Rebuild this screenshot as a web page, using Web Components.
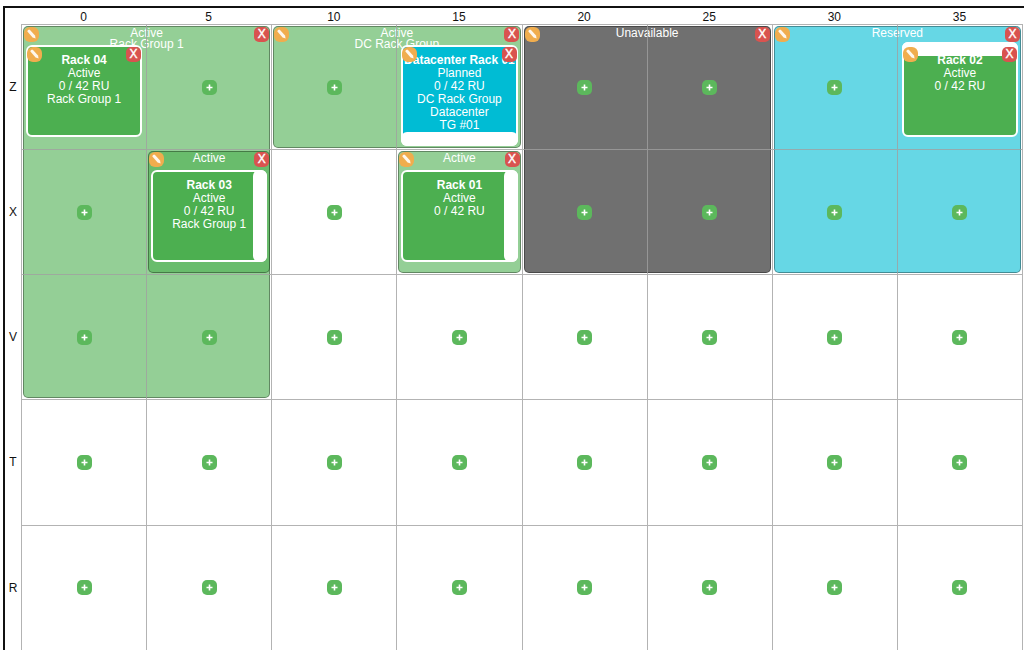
<!DOCTYPE html>
<html lang="en">
<head>
<meta charset="utf-8">
<title>Floor plan</title>
<style>
    body {
        margin: 6px 0 0 3px;
        background: #fff;
        font-family: "Liberation Sans", Arial, sans-serif;
        font-size: 12px;
        overflow: hidden;
    }
</style>
</head>
<body>

<floor-plan columns="0,5,10,15,20,25,30,35" rows="Z,X,V,T,R">
    <floor-tile col="1" row="1" width="2" depth="3" status="Active" group="Rack Group 1"></floor-tile>
    <floor-tile col="3" row="1" width="2" depth="1" status="Active" group="DC Rack Group"></floor-tile>
    <floor-tile col="5" row="1" width="2" depth="2" status="Unavailable"></floor-tile>
    <floor-tile col="7" row="1" width="2" depth="2" status="Reserved"></floor-tile>
    <floor-tile col="2" row="2" width="1" depth="1" status="Active"></floor-tile>
    <floor-tile col="4" row="2" width="1" depth="1" status="Active"></floor-tile>

    <rack-tile col="1" row="1" name="Rack 04" status="Active" lines="0 / 42 RU|Rack Group 1" editable></rack-tile>
    <rack-tile col="4" row="1" name="Datacenter Rack 01" status="Planned" lines="0 / 42 RU|DC Rack Group|Datacenter|TG #01" facing="down" editable></rack-tile>
    <rack-tile col="8" row="1" name="Rack 02" status="Active" lines="0 / 42 RU" facing="up" editable></rack-tile>
    <rack-tile col="2" row="2" name="Rack 03" status="Active" lines="0 / 42 RU|Rack Group 1" facing="right"></rack-tile>
    <rack-tile col="4" row="2" name="Rack 01" status="Active" lines="0 / 42 RU" facing="right"></rack-tile>
</floor-plan>

<script>
class TileButton extends HTMLElement {

    constructor() {
        super();
        this.shadow = this.attachShadow({mode: 'open'});
    }

    connectedCallback() {
        this.render();
    }

    icon(kind) {
        if (kind === 'edit') {
            return `<svg viewBox="0 0 15 15" aria-hidden="true">
                <path fill="#fff" opacity=".9" d="M3.4 4.6Q3.2 3.6 4.2 2.9 5.2 2.3 6 3L11 8.4 11.6 11.4 8.6 10.6Z"/>
            </svg>`;
        }
        if (kind === 'add') {
            return `<svg viewBox="0 0 15 15" aria-hidden="true">
                <path stroke="#fff" stroke-width="1.6" d="M7.5 4.5v6M4.5 7.5h6"/>
            </svg>`;
        }
        return 'X';
    }

    render() {
        let kind = this.getAttribute('kind');
        let labels = {edit: 'Edit', add: 'Add', remove: 'Remove'};
        this.shadow.innerHTML =
        `
        <style>
            :host {
                display: block;
                width: 15px;
                height: 15px;
            }

            button {
                display: flex;
                align-items: center;
                justify-content: center;
                width: 100%;
                height: 100%;
                padding: 0;
                border: 0;
                border-radius: 5px;
                color: #fff;
                font: 12px/15px "Liberation Sans", Arial, sans-serif;
                cursor: pointer;
            }

            svg {
                display: block;
                width: 15px;
                height: 15px;
            }

            .edit { background: #f0ad4e; border-radius: 6px; }
            .add { background: #5cb85c; }
            .remove { background: #d9534f; -webkit-text-stroke: 0.4px #fff; }
        </style>

        <button type="button" class="${kind}" aria-label="${labels[kind]}">${this.icon(kind)}</button>
        `;
    }
}

class FloorTile extends HTMLElement {

    constructor() {
        super();
        this.shadow = this.attachShadow({mode: 'open'});
    }

    connectedCallback() {
        this.style.gridColumn = `${Number(this.getAttribute('col')) + 1} / span ${this.getAttribute('width')}`;
        this.style.gridRow = `${Number(this.getAttribute('row')) + 1} / span ${this.getAttribute('depth')}`;
        this.render();
    }

    render() {
        let group = this.getAttribute('group');
        this.shadow.innerHTML =
        `
        <style>
            :host {
                --status: 76, 175, 80;
                display: block;
                box-sizing: border-box;
                margin: 2px 1px 1px 2px;
                border: 1px solid rgba(0, 0, 0, .35);
                border-radius: 5px;
                background: rgba(var(--status), .6);
                color: #fff;
            }

            :host([status="Unavailable"]) { --status: 17, 17, 17; }
            :host([status="Reserved"]) { --status: 0, 188, 212; }

            header {
                display: flex;
                justify-content: space-between;
                align-items: flex-start;
            }

            p {
                margin: 1px 0 0;
                line-height: 11px;
                text-align: center;
            }
        </style>

        <header>
            <tile-button kind="edit"></tile-button>
            <p>${this.getAttribute('status')}${group ? '<br>' + group : ''}</p>
            <tile-button kind="remove"></tile-button>
        </header>
        `;
    }
}

class RackTile extends HTMLElement {

    constructor() {
        super();
        this.shadow = this.attachShadow({mode: 'open'});
    }

    connectedCallback() {
        this.style.gridColumn = Number(this.getAttribute('col')) + 1;
        this.style.gridRow = Number(this.getAttribute('row')) + 1;
        this.render();
    }

    render() {
        let lines = [this.getAttribute('status')].concat(this.getAttribute('lines').split('|'));
        this.shadow.innerHTML =
        `
        <style>
            :host {
                display: block;
                box-sizing: border-box;
                position: relative;
                z-index: 2;
                margin: 21px 4px 12px 5px;
                padding-top: 7px;
                border: 2px solid #fff;
                border-radius: 6px;
                background: #4caf50;
                color: #fff;
                line-height: 13px;
                text-align: center;
                white-space: nowrap;
            }

            :host([status="Planned"]) { background: #00bcd4; }

            /* the door side runs past the edge of the rack */
            :host([facing="down"]) { margin-bottom: 3px; }
            :host([facing="up"]) { margin-top: 18px; padding-top: 10px; }

            .name {
                display: flex;
                justify-content: center;
                font-weight: bold;
            }

            .door {
                position: absolute;
                border-radius: 6px;
                background: #fff;
            }

            .up { inset: -2px -2px auto; height: 14px; }
            .down { inset: auto -2px -2px; height: 14px; }
            .right { inset: -2px -2px -2px auto; width: 14px; }

            .edit, .remove {
                position: absolute;
                top: 0;
            }

            .edit { left: -1px; }
            .remove { right: -1px; }

            :host([facing="up"]) .edit, :host([facing="up"]) .remove { top: 3px; }
        </style>

        <div class="name">${this.getAttribute('name')}</div>
        ${lines.map(line => `<div>${line}</div>`).join('')}
        ${this.hasAttribute('facing') ? `<div class="door ${this.getAttribute('facing')}"></div>` : ''}
        ${this.hasAttribute('editable') ? `
            <tile-button class="edit" kind="edit"></tile-button>
            <tile-button class="remove" kind="remove"></tile-button>` : ''}
        `;
    }
}

class FloorPlan extends HTMLElement {

    constructor() {
        super();
        this.shadow = this.attachShadow({mode: 'open'});
    }

    connectedCallback() {
        this.render();
    }

    render() {
        let columns = this.getAttribute('columns').split(',');
        let rows = this.getAttribute('rows').split(',');
        let racks = [...this.querySelectorAll('rack-tile')].map(rack => rack.getAttribute('col') + '-' + rack.getAttribute('row'));
        let cells = '';

        rows.forEach((row, y) => {
            cells += `<div class="label" style="grid-area: ${y + 2} / 1">${row}</div>`;
            columns.forEach((column, x) => {
                let taken = racks.includes((x + 1) + '-' + (y + 1));
                cells += `<div class="cell" style="grid-area: ${y + 2} / ${x + 2}">${taken ? '' : '<tile-button kind="add"></tile-button>'}</div>`;
            });
        });

        this.shadow.innerHTML =
        `
        <style>
            :host {
                display: grid;
                grid-template-columns: 16px repeat(${columns.length}, minmax(0, 1fr));
                grid-template-rows: 16px;
                padding-right: 2px;
                border: 2px solid #111;
                border-right: 0;
                color: #111;
            }

            .label {
                display: flex;
                align-items: center;
                justify-content: center;
                padding-top: 1px;
            }

            .cell {
                display: flex;
                align-items: center;
                justify-content: center;
                box-sizing: border-box;
                aspect-ratio: 1;
                z-index: 1;
                border-top: 1px solid rgba(160, 160, 160, .8);
                border-left: 1px solid rgba(160, 160, 160, .8);
                pointer-events: none;
            }

            .cell tile-button {
                pointer-events: auto;
            }

            .end {
                grid-column: ${columns.length + 1};
                grid-row: 2 / span ${rows.length};
                justify-self: end;
                width: 1px;
                margin-right: -1px;
                background: rgba(160, 160, 160, .8);
            }
        </style>

        ${columns.map((column, x) => `<div class="label" style="grid-area: 1 / ${x + 2}">${column}</div>`).join('')}
        ${cells}
        <div class="end"></div>
        <slot></slot>
        `;
    }
}

customElements.define('tile-button', TileButton);
customElements.define('floor-tile', FloorTile);
customElements.define('rack-tile', RackTile);
customElements.define('floor-plan', FloorPlan);
</script>
</body>
</html>
